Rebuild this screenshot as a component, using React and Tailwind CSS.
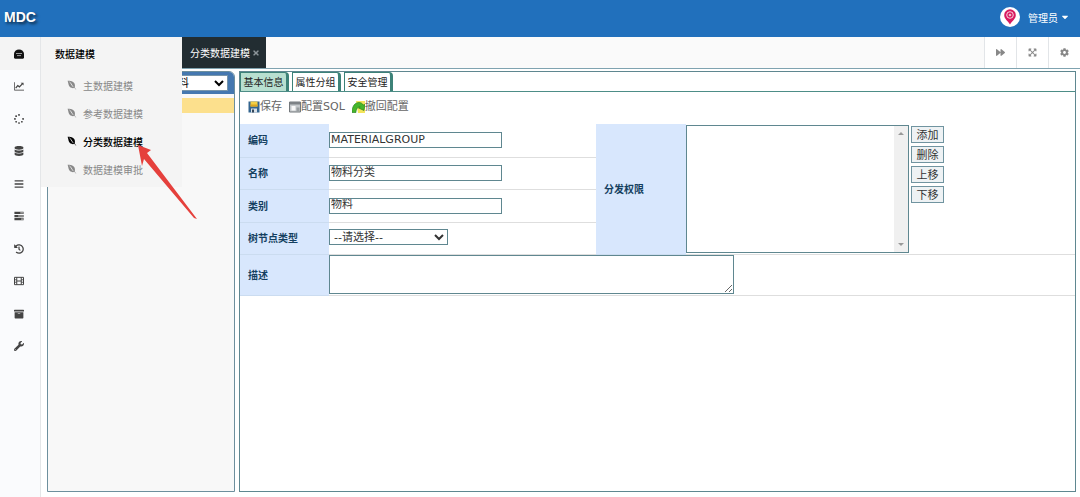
import {
  FaArchive,
  FaBars,
  FaCaretDown,
  FaCog,
  FaDatabase,
  FaEnvira,
  FaExpandArrowsAlt,
  FaForward,
  FaHistory,
  FaSpinner,
  FaTimes,
  FaWrench,
} from "react-icons/fa";

function ChartIcon({ className }) {
  return (
    <svg viewBox="0 0 12 11" className={className} aria-hidden="true">
      <path d="M.5 1v9.500H12" fill="none" stroke="currentColor" />
      <path d="M2 8l2.500-3 2 1.500L10 3" fill="none" stroke="currentColor" strokeWidth="1.500" />
      <path d="M8 1.500h3.500V5z" fill="currentColor" />
    </svg>
  );
}

function TasksIcon({ className }) {
  return (
    <svg viewBox="0 0 12 12" className={className} aria-hidden="true">
      <path d="M.5 1h11v2.700H.5zM.5 4.700h11v2.700H.5zM.5 8.400h11v2.700H.5z" fill="currentColor" />
      <path d="M7.500 2.300H11M5 6h6M8.500 9.700H11" stroke="#fff" strokeWidth="0.9" />
    </svg>
  );
}

function FilmIcon({ className }) {
  return (
    <svg viewBox="0 0 12 12" className={className} aria-hidden="true">
      <path d="M.6 1.600h10.800v8.800H.6zM3.300 1.600v8.800M8.700 1.600v8.800M3.300 6h5.400" fill="none" stroke="currentColor" strokeWidth="1.200" />
      <path d="M.6 4.500h2.700M.6 7.500h2.700M8.700 4.500h2.700M8.700 7.500h2.700" stroke="currentColor" />
    </svg>
  );
}

const sideItems = [
  { label: "统计", icon: ChartIcon },
  { label: "流程", icon: FaSpinner },
  { label: "数据", icon: FaDatabase },
  { label: "列表", icon: FaBars },
  { label: "任务", icon: TasksIcon },
  { label: "历史", icon: FaHistory },
  { label: "日志", icon: FilmIcon },
  { label: "归档", icon: FaArchive },
  { label: "设置", icon: FaWrench },
];

const menuItems = [
  { label: "主数据建模" },
  { label: "参考数据建模" },
  { label: "分类数据建模", active: true },
  { label: "数据建模审批" },
];

const tabs = ["基本信息", "属性分组", "安全管理"];

const windowTools = [
  { label: "前进", icon: FaForward },
  { label: "全屏", icon: FaExpandArrowsAlt },
  { label: "设置", icon: FaCog },
];

function ModelIcon() {
  return (
    <svg viewBox="0 0 10 10" className="size-[10px]" aria-hidden="true">
      <path d="M0 9V5a5 4.500 0 0 1 10 0v4l-1 .8H1z" fill="#111" />
      <path d="M2 4.500h6M3 6.600h4" stroke="#aaa" strokeWidth="0.9" />
    </svg>
  );
}

function PinLogo() {
  return (
    <svg viewBox="0 0 20 20" className="size-5" aria-hidden="true">
      <circle cx="10" cy="10" r="10" fill="#fff" />
      <path d="M10 17.500C8 14 4.200 12 4.200 8a5.800 5.800 0 0 1 11.600 0c0 4-3.800 6-5.800 9.500z" fill="#d81b60" />
      <circle cx="10" cy="8" r="3.300" fill="none" stroke="#fff" strokeWidth="0.8" />
      <circle cx="10" cy="8" r="1.300" fill="#f3b6cc" />
    </svg>
  );
}

function SaveIcon() {
  return (
    <svg viewBox="0 0 12 12" className="size-3" aria-hidden="true">
      <path d="M.5.5h11v11h-11z" fill="#33648f" />
      <path d="M2.500 0.500h7v5h-7z" fill="#f2cf45" />
      <path d="M2.500 3.500h7v2h-7z" fill="#dca520" />
      <path d="M3 7.500h6v4H3z" fill="#d9e1e8" />
      <path d="M4 8.500h2v3H4z" fill="#33475a" />
    </svg>
  );
}

function SqlIcon() {
  return (
    <svg viewBox="0 0 12 12" className="size-3" aria-hidden="true">
      <path d="M.5 1h11v10H.5z" fill="#c5c9cc" stroke="#73787c" />
      <path d="M1 1h10v2.500H1z" fill="#7d8286" />
      <path d="M2.500 5h4v4.500h-4z" fill="#f8f8f8" />
      <path d="M7.500 6.500h3v4h-3z" fill="#999ea1" />
    </svg>
  );
}

function RevertIcon() {
  return (
    <svg viewBox="0 0 13 12" className="h-3 w-[13px]" aria-hidden="true">
      <path d="M4 0h9v12H6z" fill="#f3e45c" />
      <path d="M0 11.500C0 5 3 1.500 7 1.500c2 0 3.500 1 4.300 2.500L13 3.500 12 9.500 6.500 7l1.700-1C6 5.500 4 8 4 11.500z" fill="#46b52a" stroke="#1d7a18" strokeWidth="0.6" />
    </svg>
  );
}

function Header() {
  return (
    <header className="flex h-[37px] shrink-0 items-center justify-between bg-[#2170bc] pr-[10px] pb-[3px] pl-1 text-white">
      <h1 className="font-['Liberation_Sans',Arial,sans-serif] text-sm font-bold [text-shadow:2px_2px_3px_#000a]">MDC</h1>
      <button className="flex items-center text-[10px]">
        <PinLogo />
        <span className="ml-2">管理员</span>
        <FaCaretDown className="ml-[2px] size-[10px]" />
      </button>
    </header>
  );
}

function Sidebar() {
  return (
    <nav className="flex w-[41px] shrink-0 flex-col border-r border-[#e4e6e8] bg-[#fafbfd]">
      <button aria-label="数据建模" className="flex h-[33px] items-center justify-center bg-[#f4f4f4] pr-[3px]">
        <ModelIcon />
      </button>
      {sideItems.map(({ label, icon: Icon }) => (
        <button key={label} aria-label={label} className="flex h-8 items-center justify-center pr-[3px] text-[#444] odd:h-[33px]">
          <Icon className="size-[10px]" />
        </button>
      ))}
    </nav>
  );
}

function FlyoutMenu() {
  return (
    <div className="absolute top-0 left-[41px] z-10 h-[150px] w-[141px] bg-[#f4f4f4] text-[10px]">
      <h2 className="flex h-8 items-center pl-[14px] font-medium text-black">数据建模</h2>
      <ul className="pt-[2px]">
        {menuItems.map(({ label, active }) => (
          <li key={label}>
            <a
              href="#"
              className={`flex h-7 items-center gap-[6px] pl-[26px] ${active ? "font-medium text-black" : "text-[#888]"}`}
            >
              <FaEnvira className="size-[10px]" />
              {label}
            </a>
          </li>
        ))}
      </ul>
    </div>
  );
}

function PageTabs() {
  return (
    <div className="flex h-8 shrink-0 border-b border-[#7fa3b0] bg-[#fafafa]">
      <div className="w-[141px]" />
      <div className="flex w-[84px] items-center justify-end gap-[2px] bg-[#222d32] pr-[6px] text-[10px] text-white">
        分类数据建模
        <button aria-label="关闭">
          <FaTimes className="size-[8px] text-[#8b9499]" />
        </button>
      </div>
      <div className="ml-auto flex">
        {windowTools.map(({ label, icon: Icon }) => (
          <button key={label} aria-label={label} className="flex w-8 items-center justify-center border-l border-[#e2e5e8] bg-white text-[#888]">
            <Icon className="size-[9px]" />
          </button>
        ))}
      </div>
    </div>
  );
}

function TreePanel() {
  return (
    <aside className="flex w-[188px] shrink-0 flex-col rounded-t-md border border-[#6d8f9d] bg-[#f8f8f8]">
      <div className="flex h-[22px] items-center justify-end rounded-t-[5px] bg-[#4578b0] pr-[6px]">
        <select
          aria-label="分类"
          className="h-4 w-[120px] border border-[#7795aa] bg-white pl-[54px] font-['DejaVu_Sans','Noto_Sans_CJK_SC',sans-serif] text-[11px] leading-none"
        >
          <option>物料</option>
        </select>
      </div>
      <div className="mt-1 h-[15px] bg-[#fce08d]" />
    </aside>
  );
}

function Label({ htmlFor, children }) {
  return (
    <label htmlFor={htmlFor} className="block text-[10px] leading-4 font-bold text-[#143f60]">
      {children}
    </label>
  );
}

const fieldClass =
  "block border border-[#5f8790] bg-white font-['DejaVu_Sans','Noto_Sans_CJK_SC',sans-serif] text-[11px] text-[#333]";
const headClass = "border-b border-[#cbdcf0] bg-[#d8e7fd] pl-2 text-left";
const cellClass = "border-b border-[#dedede]";

function ModelForm() {
  return (
    <table className="w-full table-fixed border-collapse">
      <colgroup>
        <col className="w-[89px]" />
        <col className="w-[267px]" />
        <col className="w-[90px]" />
        <col />
      </colgroup>
      <tbody>
        <tr className="h-[33px]">
          <th className={headClass}><Label htmlFor="code">编码</Label></th>
          <td className={cellClass}>
            <input id="code" defaultValue="MATERIALGROUP" className={`${fieldClass} h-4 w-[173px] px-px`} />
          </td>
          <th rowSpan={4} className={headClass}><Label htmlFor="rights">分发权限</Label></th>
          <td rowSpan={4} className={`${cellClass} align-top`}>
            <div className="flex items-start gap-[2px] pt-px">
              <div className="flex h-[128px] w-[223px] border border-[#5f8790]">
                <select id="rights" size={8} className="min-w-0 flex-1 overflow-hidden bg-white" />
                <div className="flex w-[14px] flex-col items-center justify-between bg-[#f0f0f0] py-[6px]">
                  <span className="border-x-3 border-b-3 border-x-transparent border-b-[#999]" />
                  <span className="border-x-3 border-t-3 border-x-transparent border-t-[#999]" />
                </div>
              </div>
              <div className="flex flex-col gap-[3px] pt-px">
                {["添加", "删除", "上移", "下移"].map((text) => (
                  <button key={text} className="h-[17px] w-[33px] border border-[#7094a0] bg-[#eef2f4] text-[11px] leading-none text-[#333]">
                    {text}
                  </button>
                ))}
              </div>
            </div>
          </td>
        </tr>
        <tr className="h-[32px]">
          <th className={headClass}><Label htmlFor="name">名称</Label></th>
          <td className={cellClass}>
            <input id="name" defaultValue="物料分类" className={`${fieldClass} h-4 w-[173px] px-px`} />
          </td>
        </tr>
        <tr className="h-[33px]">
          <th className={headClass}><Label htmlFor="category">类别</Label></th>
          <td className={cellClass}>
            <input id="category" defaultValue="物料" className={`${fieldClass} h-4 w-[173px] px-px`} />
          </td>
        </tr>
        <tr className="h-[32px]">
          <th className={headClass}><Label htmlFor="nodeType">树节点类型</Label></th>
          <td className={`${cellClass} pb-[2px]`}>
            <select id="nodeType" className={`${fieldClass} h-4 w-[119px] leading-none`}>
              <option>--请选择--</option>
            </select>
          </td>
        </tr>
        <tr className="h-[41px]">
          <th className={headClass}><Label htmlFor="description">描述</Label></th>
          <td colSpan={3} className={cellClass}>
            <textarea id="description" className={`${fieldClass} h-[39px] w-[405px]`} />
          </td>
        </tr>
      </tbody>
    </table>
  );
}

function DetailPanel() {
  return (
    <section className="min-w-0 flex-1 border border-[#5f8790] bg-white">
      <div className="flex h-5 gap-[3px] border-b border-[#4d8d87] bg-white" role="tablist">
        {tabs.map((tab, idx) => (
          <button
            key={tab}
            role="tab"
            aria-selected={idx === 0}
            className={`w-[49px] rounded-tr-sm border-t border-r-3 border-l border-[#3d8278] text-[10px] leading-none text-[#222] ${idx === 0 ? "bg-[#b8dfd0]" : "bg-white"}`}
          >
            {tab}
          </button>
        ))}
      </div>
      <div className="flex h-8 items-center gap-[7px] pb-[2px] pl-2 font-['DejaVu_Sans','Noto_Sans_CJK_SC',sans-serif] text-[11px] text-[#666]">
        <button className="flex items-center"><SaveIcon />保存</button>
        <button className="flex items-center"><SqlIcon />配置SQL</button>
        <button className="flex items-center"><RevertIcon />撤回配置</button>
      </div>
      <ModelForm />
    </section>
  );
}

export default function App() {
  return (
    <div className="flex min-h-screen flex-col bg-white font-['Noto_Sans_CJK_SC',sans-serif]">
      <Header />
      <div className="relative flex flex-1">
        <Sidebar />
        <FlyoutMenu />
        <main className="flex min-w-0 flex-1 flex-col">
          <PageTabs />
          <div className="flex flex-1 gap-1 pt-[2px] pr-1 pb-[5px] pl-[6px]">
            <TreePanel />
            <DetailPanel />
          </div>
        </main>
        <svg viewBox="0 0 60 76" className="pointer-events-none absolute top-[107px] left-[137px] z-20 h-[76px] w-[60px]" aria-hidden="true">
          <path d="M1 1l13 5-4 3 50 66-3-1L7 15l-2 7z" fill="#e5403c" />
        </svg>
      </div>
    </div>
  );
}
